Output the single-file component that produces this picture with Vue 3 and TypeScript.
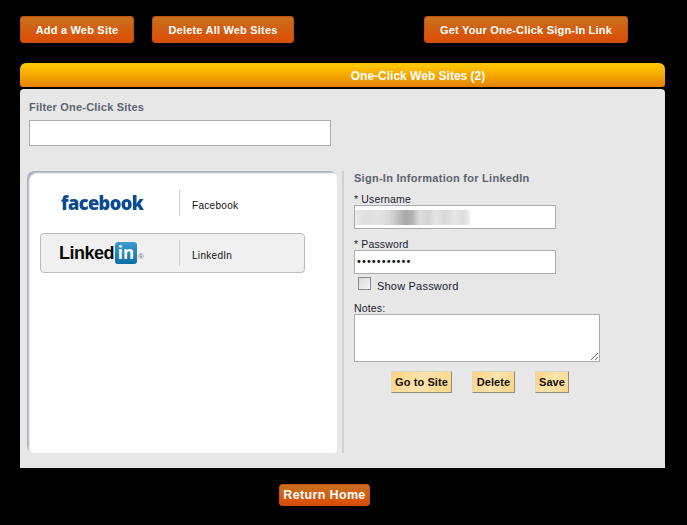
<script setup lang="ts">
const title = 'One-Click Web Sites (2)'
</script>

<template>
  <div class="page">
    <div class="actions">
      <button class="orange add">Add a Web Site</button>
      <button class="orange del-all">Delete All Web Sites</button>
      <button class="orange link">Get Your One-Click Sign-In Link</button>
    </div>
    <div class="bar">{{ title }}</div>
    <div class="panel">
      <div class="filter-label">Filter One-Click Sites</div>
      <div class="filter-input"></div>
      <div class="columns">
        <div class="list">
          <div class="site">
            <div class="logo"><span class="fb">facebook</span></div>
            <div class="name">Facebook</div>
          </div>
          <div class="site selected">
            <div class="logo">
              <span class="li">Linked</span><span class="in">in</span><span class="reg">®</span>
            </div>
            <div class="name">LinkedIn</div>
          </div>
        </div>
        <div class="form">
          <div class="form-title">Sign-In Information for LinkedIn</div>
          <label class="lbl first">* Username</label>
          <div class="input user"><div class="blur"></div></div>
          <label class="lbl second">* Password</label>
          <div class="input pass">•••••••••••</div>
          <div class="show">
            <span class="check"></span>
            <span class="show-text">Show Password</span>
          </div>
          <label class="lbl notes-lbl">Notes:</label>
          <div class="notes">
            <svg class="grip" width="10" height="10" viewBox="0 0 10 10">
              <path d="M2 9 9 2M6 9 9 6" stroke="#666" stroke-width="1" fill="none" />
            </svg>
          </div>
          <div class="form-actions">
            <button class="tan go">Go to Site</button>
            <button class="tan del">Delete</button>
            <button class="tan save">Save</button>
          </div>
        </div>
      </div>
    </div>
    <div class="footer"><button class="orange home">Return Home</button></div>
  </div>
</template>

<style>
html, body { background: #000; margin: 0; }
</style>

<style scoped>
.page {
  width: 687px;
  height: 525px;
  background: #000;
  box-sizing: border-box;
  padding: 16px 22px 0 20px;
  font-family: "Liberation Sans", Arial, sans-serif;
  overflow: hidden;
}
button { font-family: inherit; padding: 0; cursor: pointer; }
.actions { display: flex; height: 27px; }
.orange {
  height: 27px;
  border: 1px solid #c8500f;
  border-radius: 3px;
  background: linear-gradient(#c8701f, #dc4d05);
  color: #fff;
  font-size: 11px;
  font-weight: bold;
  letter-spacing: 0.2px;
}
.add { width: 114px; }
.del-all { width: 142px; margin-left: 18px; }
.link { width: 204px; margin-left: 130px; }
.bar {
  margin-top: 20px;
  height: 24px;
  border-radius: 6px 6px 3px 3px;
  background: linear-gradient(#ffc600 10%, #e88200);
  color: #fff;
  font-size: 12px;
  font-weight: bold;
  line-height: 26px;
  text-align: center;
  box-sizing: border-box;
  padding-left: 151px;
}
.panel {
  margin-top: 2px;
  height: 379px;
  background: #e7e7e7;
  border-radius: 4px 4px 0 0;
  box-sizing: border-box;
  padding: 12px 7px 0 7px;
}
.filter-label {
  margin-left: 2px;
  font-size: 11px;
  font-weight: bold;
  line-height: 13px;
  color: #5b6470;
  letter-spacing: 0.2px;
}
.filter-input {
  margin: 6px 0 0 2px;
  width: 302px;
  height: 26px;
  box-sizing: border-box;
  background: #fff;
  border: 1px solid #a6abb0;
}
.columns { display: flex; margin-top: 25px; }
.list {
  flex: none;
  width: 310px;
  height: 282px;
  box-sizing: border-box;
  background: #fff;
  border-radius: 7px 7px 4px 7px;
  box-shadow: inset 3px 3px 2px -1px #a9afb9;
  padding: 12px 0 0 13px;
}
.site {
  width: 265px;
  height: 40px;
  box-sizing: border-box;
  display: flex;
  align-items: center;
  border: 1px solid transparent;
  border-radius: 4px;
}
.site.selected {
  margin-top: 10px;
  background: #f0f0f0;
  border-color: #bcbcbc;
}
.logo {
  width: 139px;
  height: 26px;
  border-right: 1px solid #cfcfcf;
  display: flex;
  align-items: center;
  padding-left: 18px;
  box-sizing: border-box;
}
.fb {
  margin-left: 2px;
  color: #0e4a94;
  font-family: "Open Sans", sans-serif;
  font-weight: 800;
  font-size: 20px;
  letter-spacing: -0.75px;
  line-height: 26px;
  transform: scaleX(0.92);
  transform-origin: left center;
}
.li {
  color: #0b0b0b;
  font-family: "Liberation Sans", sans-serif;
  font-weight: 700;
  font-size: 18px;
  letter-spacing: -0.5px;
}
.in {
  width: 22px;
  height: 22px;
  margin-left: 1px;
  border-radius: 3px;
  background: linear-gradient(#3d9cd0, #0c6ea6);
  color: #fff;
  font-family: "Open Sans", sans-serif;
  font-weight: 700;
  font-size: 17px;
  line-height: 22px;
  text-align: center;
}
.reg { color: #777; font-size: 8px; margin: 7px 0 0 1px; }
.name {
  margin: 5px 0 0 12px;
  font-size: 10px;
  letter-spacing: 0.3px;
  color: #111;
}
.form {
  flex: none;
  margin-left: 5px;
  width: 314px;
  height: 282px;
  border-left: 2px solid #d0d0d0;
  box-sizing: border-box;
  padding-left: 10px;
}
.form-title {
  font-size: 11px;
  font-weight: bold;
  line-height: 13px;
  margin-top: 1px;
  color: #5b6470;
  letter-spacing: 0.27px;
}
.lbl {
  display: block;
  font-size: 10.5px;
  line-height: 12px;
  color: #1a2230;
  letter-spacing: 0.15px;
}
.first { margin-top: 8px; }
.second { margin-top: 9px; }
.input {
  width: 202px;
  height: 24px;
  box-sizing: border-box;
  background: #fff;
  border: 1px solid #a6abb0;
}
.user { position: relative; }
.blur {
  position: absolute;
  left: 0;
  top: 4px;
  width: 115px;
  height: 15px;
  filter: blur(0.6px);
  background: linear-gradient(90deg, #ececec 0, #dedede 8%, #e2e2e2 20%, #d8d8d8 30%, #c4c4c4 36%, #a8a8a8 44%, #b4b4b4 50%, #dcdcdc 56%, #d4d4d4 64%, #e4e4e4 70%, #d8d8d8 78%, #e6e6e6 86%, #dcdcdc 94%, #f0f0f0 100%);
}
.pass {
  font-family: "DejaVu Sans", sans-serif;
  font-size: 10px;
  line-height: 22px;
  padding-left: 1px;
  letter-spacing: -0.95px;
  color: #111;
  white-space: nowrap;
}
.show {
  display: flex;
  align-items: center;
  height: 14px;
  margin: 3px 0 0 4px;
  color: #1a2230;
}
.show-text {
  margin-top: 3px;
  font-size: 11px;
  letter-spacing: 0.2px;
}
.check {
  width: 13px;
  height: 13px;
  box-sizing: border-box;
  border: 1px solid #8a8a8a;
  background: linear-gradient(135deg, #d8d8d8, #f6f6f6);
  margin-right: 6px;
  margin-top: -1px;
}
.notes-lbl { margin-top: 11px; }
.notes {
  width: 246px;
  height: 48px;
  box-sizing: border-box;
  background: #fff;
  border: 1px solid #a6abb0;
  position: relative;
}
.grip { position: absolute; right: 0; bottom: 0; }
.form-actions { display: flex; margin: 9px 0 0 37px; }
.tan {
  height: 22px;
  border: 1px solid;
  border-color: #d8d8c8 #8c8c80 #8c8c80 #d8d8c8;
  background: linear-gradient(120deg, #ffd27f, #fde3ad 50%, #fdd484);
  color: #111;
  font-size: 11px;
  font-weight: bold;
  letter-spacing: 0.1px;
}
.go { width: 61px; }
.del { width: 43px; margin-left: 20px; }
.save { width: 34px; margin-left: 20px; }
.footer { margin-top: 16px; padding-left: 259px; }
.home {
  width: 91px;
  height: 22px;
  font-size: 12.5px;
  letter-spacing: 0.35px;
}
</style>
